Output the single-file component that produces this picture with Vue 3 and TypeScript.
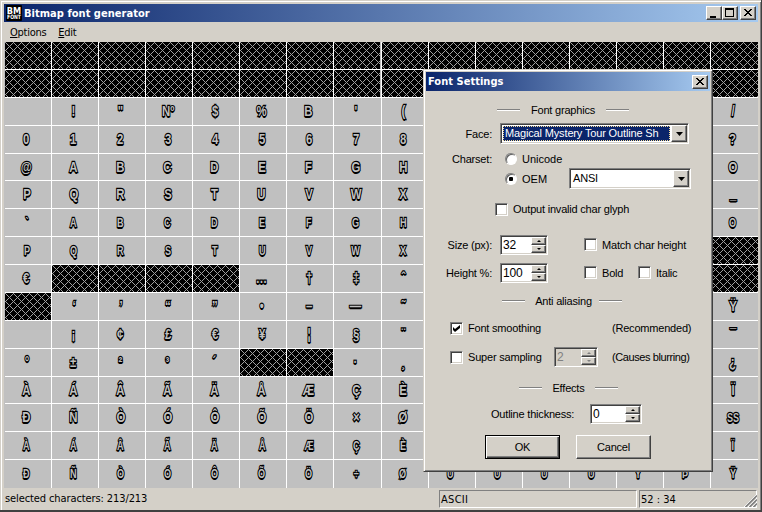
<script setup lang="ts">
import { ref } from 'vue'

interface Cell {
  char: string
  valid: boolean
  small: boolean
}

const rows: string[] = [
  '################',
  '################',
  ' !"№$%B\'(      /',
  '012345678      ?',
  '@ABCDEFGH      O',
  'PQRSTUVWX      _',
  '`ABCDEFGH      O',
  'PQRSTUVWX      #',
  '€####…†‡ˆ      #',
  '#‘’“”•–—˜      Ÿ',
  ' ¡¢£€¥¦§¨      ¯',
  '°±²³´##·¸      ¿',
  'ÀÁÂÃÄÅÆÇÈ      Ï',
  'ÐÑÒÓÔÕÖ×Ø      §',
  'ÀÁÂÃÄÅÆÇÈ      Ï',
  'ÐÑÒÓÔÕÖ÷ØÙÚÛÜÝÞŸ',
]
const smallRows = [6, 7, 14, 15]

const cells: Cell[] = rows.flatMap((row, r) =>
  Array.from(row).map((c) => ({
    char: c === '№' ? 'Nº' : r === 13 && c === '§' ? 'SS' : c,
    valid: c !== '#',
    small: smallRows.includes(r) || (r === 13 && c === '§'),
  })),
)

const hatch: [number, number][] = []
for (let i = 0; i < 8; i++) {
  hatch.push([i, i])
  hatch.push([i, (8 - i) % 8])
}

const charset = ref<'unicode' | 'oem'>('oem')
const smoothing = ref(true)
</script>

<template>
  <div class="window">
    <header class="titlebar main-title">
      <svg class="app-icon" width="16" height="16" viewBox="0 0 16 16">
        <rect width="16" height="16" rx="1" fill="#000" />
        <text x="0.8" y="8.6" class="icon-big" textLength="14.4" lengthAdjust="spacingAndGlyphs">BM</text>
        <text x="1" y="14.4" class="icon-small" textLength="14" lengthAdjust="spacingAndGlyphs">FONT</text>
      </svg>
      <span class="title-text">Bitmap font generator</span>
      <div class="win-buttons">
        <button class="raised tbtn"><svg width="12" height="10"><path d="M2 8h6v2H2z" /></svg></button>
        <button class="raised tbtn"><svg width="12" height="10"><path d="M1 0h9v9H1zM2 2v6h7V2z" fill-rule="evenodd" /></svg></button>
        <button class="raised tbtn close"><svg width="12" height="10"><path d="M2 1h2v1h1v1h2V2h1V1h2v1H9v1H8v1H7v1h1v1h1v1h1v1H8V7H7V6H5v1H4v1H2V7h1V6h1V5h1V4H4V3H3V2H2z" /></svg></button>
      </div>
    </header>
    <nav class="menu">
      <span><u>O</u>ptions</span>
      <span><u>E</u>dit</span>
    </nav>
    <svg class="defs" width="0" height="0">
      <defs>
        <pattern id="hatch" width="8" height="8" patternUnits="userSpaceOnUse">
          <rect width="8" height="8" fill="#000" />
          <rect v-for="([x, y], i) in hatch" :key="i" :x="x" :y="y" width="1" height="1" fill="#a0a0a0" />
        </pattern>
      </defs>
    </svg>
    <main class="glyphs">
      <div v-for="(cell, i) in cells" :key="i" class="cell">
        <template v-if="cell.valid">
          <span v-if="cell.char !== ' '" class="glyph" :class="{ small: cell.small }">{{ cell.char }}</span>
        </template>
        <svg v-else class="blank" shape-rendering="crispEdges"><rect width="100%" height="100%" fill="url(#hatch)" /></svg>
      </div>
    </main>
    <footer class="status">
      <span class="count">selected characters: 213/213</span>
      <span class="panel set">ASCII</span>
      <span class="panel pos">52 : 34</span>
      <svg class="grip" width="13" height="13" viewBox="0 0 13 13">
        <path d="M0 13L13 0M4 13L13 4M8 13L13 8" stroke="#fff" />
        <path d="M1.5 13L13 1.5M5.5 13L13 5.5M9.5 13L13 9.5" stroke="#808080" stroke-width="1.6" />
      </svg>
    </footer>

    <section class="dialog">
      <header class="titlebar dlg-title">
        <span class="title-text">Font Settings</span>
        <button class="raised tbtn close"><svg width="12" height="10"><path d="M2 1h2v1h1v1h2V2h1V1h2v1H9v1H8v1H7v1h1v1h1v1h1v1H8V7H7V6H5v1H4v1H2V7h1V6h1V5h1V4H4V3H3V2H2z" /></svg></button>
      </header>

      <div class="row head r1"><i /><span class="w64">Font graphics</span><i /></div>

      <div class="row r2">
        <label class="lead">Face:</label>
        <div class="sunken combo face">
          <span class="sel">Magical Mystery Tour Outline Sh</span>
          <button class="raised drop"><svg width="7" height="4"><path d="M0 0h7L3.5 4z" /></svg></button>
        </div>
      </div>
      <div class="row r3">
        <label class="lead">Charset:</label>
        <span class="radio" :class="{ on: charset === 'unicode' }" @click="charset = 'unicode'" />
        <span class="rl">Unicode</span>
      </div>
      <div class="row r4">
        <label class="lead" />
        <span class="radio" :class="{ on: charset === 'oem' }" @click="charset = 'oem'" />
        <span class="rl oem">OEM</span>
        <div class="sunken combo ansi">
          <span class="val">ANSI</span>
          <button class="raised drop"><svg width="7" height="4"><path d="M0 0h7L3.5 4z" /></svg></button>
        </div>
      </div>
      <div class="row r5"><span class="sunken check" /><span class="cl">Output invalid char glyph</span></div>

      <div class="row r6">
        <label class="lead">Size (px):</label>
        <div class="sunken spin"><span>32</span><div class="ud"><b class="raised up" /><b class="raised dn" /></div></div>
        <span class="sunken check second" /><span class="cl">Match char height</span>
      </div>
      <div class="row r7">
        <label class="lead">Height %:</label>
        <div class="sunken spin"><span>100</span><div class="ud"><b class="raised up" /><b class="raised dn" /></div></div>
        <span class="sunken check second" /><span class="cl bold">Bold</span>
        <span class="sunken check" /><span class="cl">Italic</span>
      </div>

      <div class="row head r8"><i /><span class="w56">Anti aliasing</span><i /></div>
      <div class="row r9">
        <span class="sunken check" @click="smoothing = !smoothing">
          <svg v-if="smoothing" width="7" height="7"><path d="M0 2l2 2 5-4v3L2 7 0 5z" /></svg>
        </span>
        <span class="cl aa">Font smoothing</span><span>(Recommended)</span>
      </div>
      <div class="row r10">
        <span class="sunken check" /><span class="cl ss">Super sampling</span>
        <div class="sunken spin off"><span>2</span><div class="ud"><b class="raised up" /><b class="raised dn" /></div></div>
        <span class="note">(Causes blurring)</span>
      </div>

      <div class="row head r11"><i /><span class="w33">Effects</span><i /></div>
      <div class="row r12">
        <span class="thick">Outline thickness:</span>
        <div class="sunken spin wide"><span>0</span><div class="ud"><b class="raised up" /><b class="raised dn" /></div></div>
      </div>
      <div class="row r13">
        <button class="raised push default">OK</button>
        <button class="raised push">Cancel</button>
      </div>
    </section>
  </div>
</template>

<style>
body {
  overflow: hidden;
}
</style>

<style scoped>
* {
  box-sizing: border-box;
}
.window {
  position: relative;
  width: 762px;
  height: 512px;
  padding: 4px 3px 2px 4px;
  display: flex;
  flex-direction: column;
  background: #d4d0c8;
  border-right: 1px solid #404040;
  border-bottom: 2px solid #404040;
  box-shadow: inset 1px 1px #d4d0c8, inset 2px 2px #fff, inset -1px 0 #808080;
  font-family: 'DejaVu Sans Condensed', 'DejaVu Sans', sans-serif;
  font-size: 11px;
  color: #000;
}
button {
  padding: 0;
  font: inherit;
  letter-spacing: inherit;
  color: #000;
}
.titlebar {
  height: 18px;
  flex: none;
  display: flex;
  align-items: center;
  background: linear-gradient(to right, #0a246a, #a6caf0);
  color: #fff;
  font-weight: bold;
}
.main-title {
  width: 754px;
  padding: 0 2px;
}
.app-icon {
  margin-right: 2px;
  overflow: visible;
}
.icon-big {
  font: bold 9px 'DejaVu Sans', sans-serif;
  fill: #fff;
}
.icon-small {
  font: bold 6px 'DejaVu Sans', sans-serif;
  fill: #fff;
}
.title-text {
  flex: 1;
  white-space: nowrap;
  letter-spacing: 0.03px;
}
.win-buttons {
  display: flex;
}
.raised {
  background: #d4d0c8;
  border: 1px solid;
  border-color: #fff #404040 #404040 #fff;
  box-shadow: inset -1px -1px #808080;
}
.tbtn {
  width: 16px;
  height: 14px;
  display: flex;
  align-items: flex-start;
  padding: 1px;
}
.win-buttons .close {
  margin-left: 2px;
}
.menu {
  height: 20px;
  flex: none;
  display: flex;
  gap: 12px;
  padding-left: 6px;
  line-height: 21px;
  letter-spacing: -0.27px;
}
.defs {
  position: absolute;
}
.glyphs {
  width: 754px;
  height: 446px;
  flex: none;
  padding-left: 1px;
  display: grid;
  grid-template-columns: repeat(16, minmax(0, 1fr));
  grid-template-rows: repeat(16, minmax(0, 1fr));
  background: #c0c0c0;
}
.cell {
  display: flex;
  justify-content: center;
  border-right: 1px solid #fff;
  border-bottom: 1px solid #fff;
  overflow: hidden;
}
.cell:nth-child(16n) {
  border-right: 0;
}
.cell:nth-child(n + 241) {
  border-bottom: 0;
}
.blank {
  width: 100%;
  height: 100%;
  display: block;
}
.glyph {
  margin-left: -3px;
  font: bold 15px/26px 'Liberation Sans', sans-serif;
  transform: scaleX(0.76);
  color: #c0c0c0;
  -webkit-text-stroke: 2.4px #000;
  paint-order: stroke fill;
  text-shadow: 0 1px #000, 0 2px #000;
  white-space: pre;
}
.glyph.small {
  font-size: 12px;
  line-height: 28px;
}
.status {
  height: 21px;
  display: flex;
  position: relative;
  padding-top: 2px;
  line-height: 18px;
}
.count {
  width: 435px;
  padding-left: 1px;
  letter-spacing: -0.1px;
}
.panel {
  height: 18px;
  border: 1px solid;
  border-color: #808080 #fff #fff #808080;
  line-height: 17px;
  padding-left: 1px;
}
.set {
  width: 198px;
  letter-spacing: 0.3px;
}
.pos {
  width: 118px;
  margin-left: 2px;
}
.grip {
  position: absolute;
  right: 1px;
  bottom: 1px;
}
.dialog {
  position: absolute;
  left: 423px;
  top: 69px;
  width: 290px;
  height: 403px;
  padding: 2px;
  background: #d4d0c8;
  border: 1px solid;
  border-color: #d4d0c8 #404040 #404040 #d4d0c8;
  box-shadow: inset 1px 1px #fff, inset -1px -1px #808080;
  font-family: 'Liberation Sans', sans-serif;
  font-size: 11px;
  letter-spacing: -0.2px;
}
.dlg-title {
  height: 19px;
  padding: 0 2px;
  font-family: 'DejaVu Sans Condensed', sans-serif;
}
.row {
  display: flex;
  align-items: center;
  height: 20px;
  white-space: nowrap;
}
.head i {
  width: 23px;
  height: 2px;
  background: #fff;
  border-top: 1px solid #808080;
}
.head span {
  text-align: center;
}
.w64 {
  width: 86px;
}
.w56 {
  width: 74px;
  padding-left: 3px;
}
.w33 {
  width: 53px;
}
.lead {
  width: 66px;
  text-align: right;
  margin-right: 8px;
}
.sunken {
  background: #fff;
  border: 1px solid;
  border-color: #808080 #fff #fff #808080;
  box-shadow: inset 1px 1px #404040, inset -1px -1px #d4d0c8;
}
.r1 { margin-top: 9px; padding-left: 71px; }
.r2 { margin-top: 3px; height: 21px; }
.r3 { margin-top: 5px; height: 19px; }
.r4 { height: 21px; }
.r5 { margin-top: 10px; padding-left: 69px; }
.r6 { margin-top: 16px; height: 19px; }
.r7 { margin-top: 9px; height: 19px; }
.r8 { margin-top: 9px; padding-left: 76px; }
.r9 { margin-top: 7px; padding-left: 24px; }
.r10 { margin-top: 9px; padding-left: 24px; }
.r11 { margin-top: 11px; padding-left: 93px; }
.r12 { margin-top: 6px; height: 19px; padding-left: 65px; }
.r13 { margin-top: 12px; height: 24px; padding-left: 59px; gap: 16px; }
.combo {
  display: flex;
  padding: 1px;
  height: 21px;
}
.face {
  width: 189px;
}
.ansi {
  width: 122px;
}
.sel {
  flex: 1;
  margin: 1px;
  padding-left: 2px;
  background: #0a246a;
  color: #fff;
  outline: 1px dotted #f5db95;
  outline-offset: -1px;
  line-height: 15px;
  letter-spacing: -0.15px;
}
.val {
  flex: 1;
  padding-left: 2px;
  line-height: 17px;
}
.drop {
  width: 16px;
  display: flex;
  align-items: center;
  justify-content: center;
}
.radio {
  width: 12px;
  height: 12px;
  margin-left: 5px;
  border-radius: 50%;
  background: #fff;
  border: 1px solid;
  border-color: #808080 #fff #fff #808080;
  box-shadow: inset 1px 1px #606060;
}
.radio.on {
  background: radial-gradient(circle, #000 2px, #fff 2.5px);
}
.rl {
  margin-left: 5px;
  letter-spacing: 0;
}
.oem {
  width: 47px;
}
.check {
  width: 13px;
  height: 13px;
  flex: none;
  display: flex;
  align-items: center;
  justify-content: center;
}
.cl {
  margin-left: 5px;
}
.second {
  margin-left: 36px;
}
.bold {
  width: 36px;
}
.aa {
  width: 144px;
}
.ss {
  width: 86px;
}
.spin {
  width: 48px;
  height: 20px;
  display: flex;
  padding: 1px;
}
.spin span {
  flex: 1;
  padding-left: 1px;
  line-height: 16px;
  font-size: 12px;
}
.ud {
  width: 15px;
  display: flex;
  flex-direction: column;
}
.ud b {
  flex: 1;
  display: flex;
  align-items: center;
  justify-content: center;
}
.ud b::before {
  content: '';
  border: 2px solid transparent;
}
.up::before {
  border-top: 0 !important;
  border-bottom-color: #000 !important;
}
.dn::before {
  border-bottom: 0 !important;
  border-top-color: #000 !important;
}
.off {
  width: 44px;
  background: #d4d0c8;
  color: #808080;
}
.off .up::before {
  border-bottom-color: #808080 !important;
}
.off .dn::before {
  border-top-color: #808080 !important;
}
.note {
  margin-left: 14px;
  letter-spacing: -0.4px;
}
.thick {
  width: 99px;
}
.wide {
  width: 52px;
}
.push {
  width: 75px;
  height: 24px;
}
.default {
  border-color: #000;
  box-shadow: inset 1px 1px #fff, inset -1px -1px #404040, inset -2px -2px #808080;
}
</style>
